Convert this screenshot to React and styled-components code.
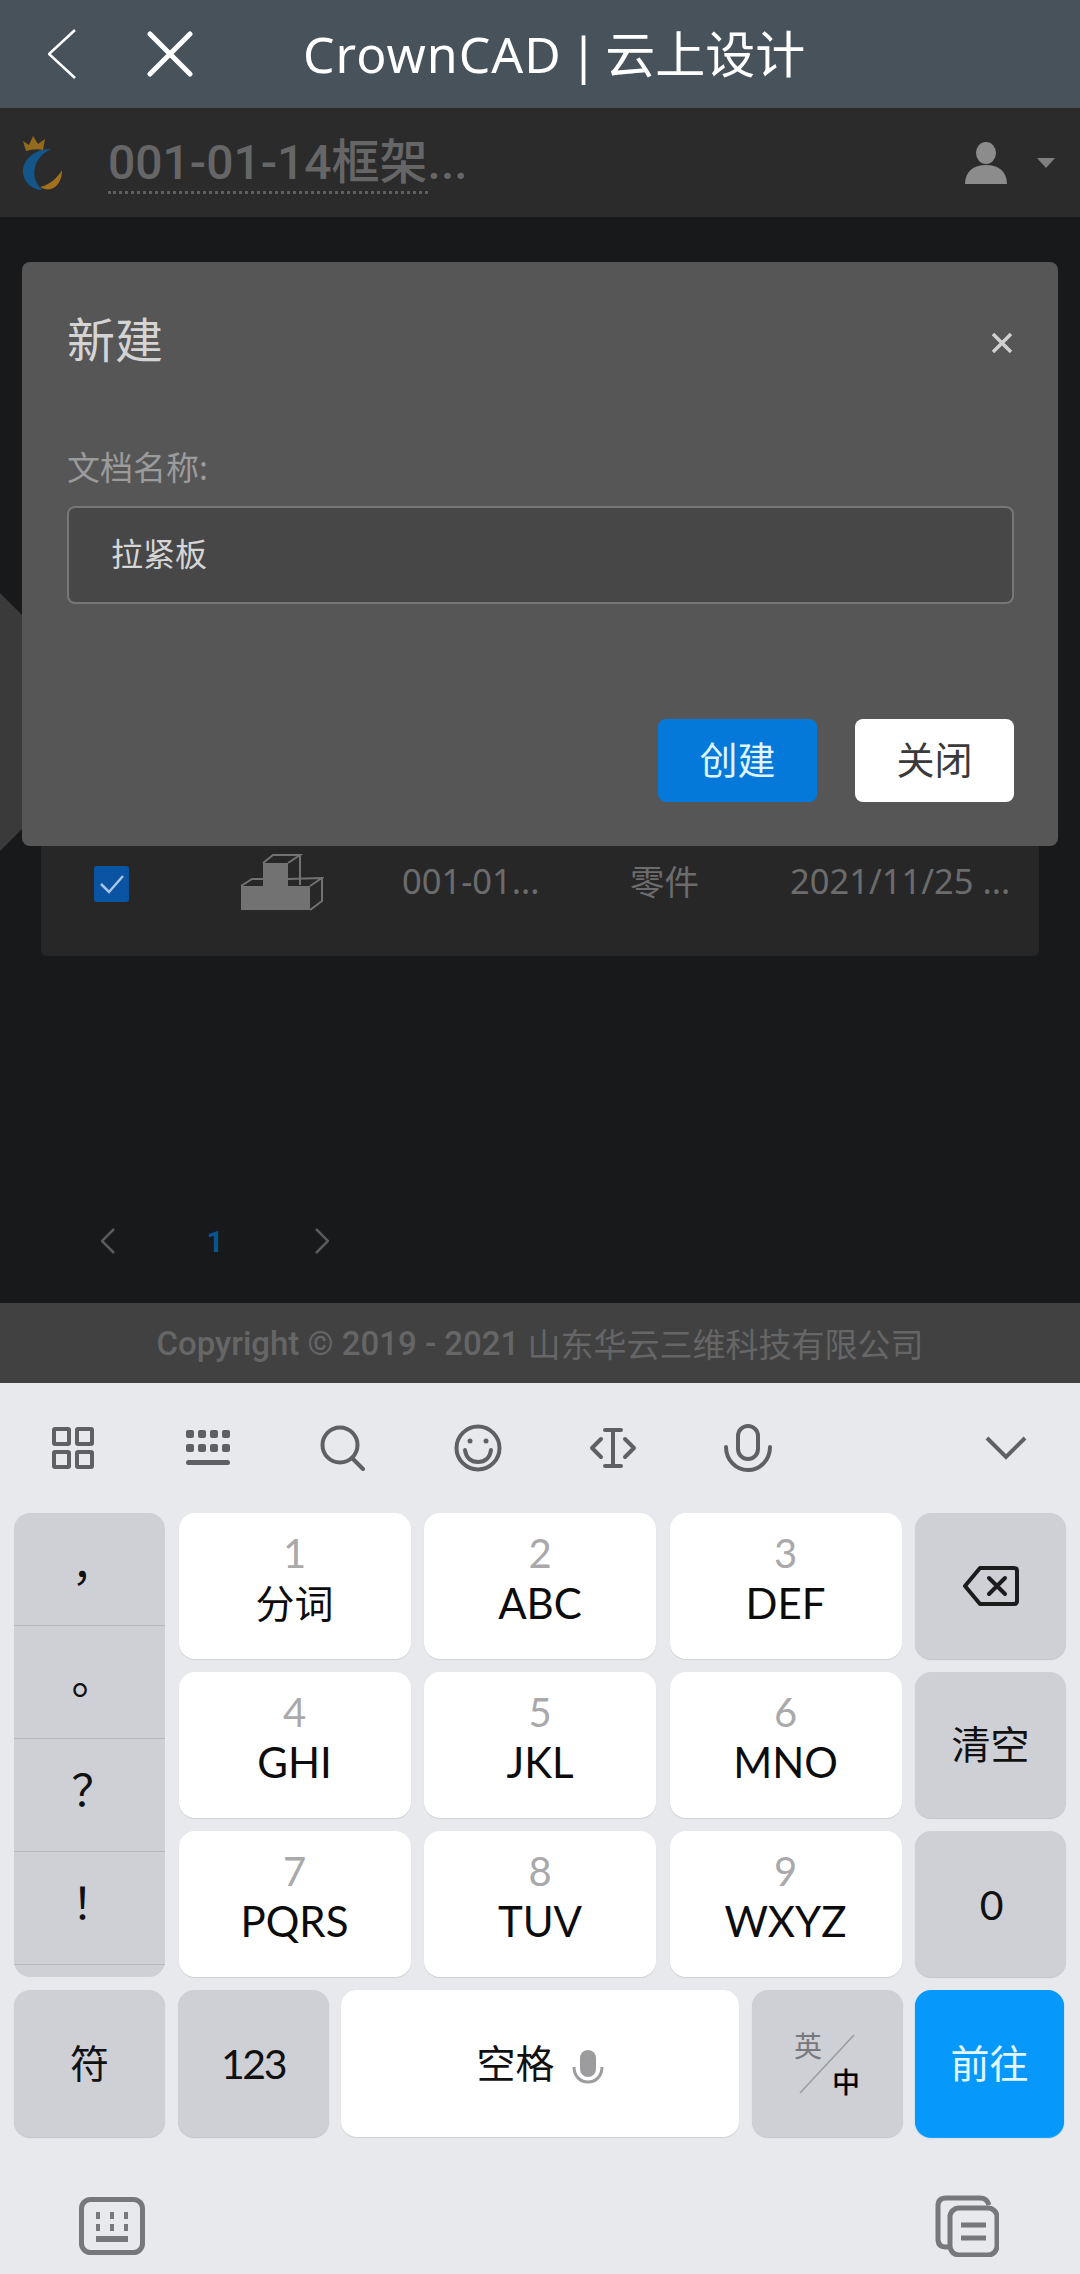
import React from 'react';
import styled, { createGlobalStyle } from 'styled-components';

const CJK = '"Noto Sans CJK SC", sans-serif';

const GlobalStyle = createGlobalStyle`
    html, body {
        margin: 0;
        padding: 0;
        background: #18191b;
    }
    * {
        box-sizing: border-box;
    }
`;

const Screen = styled.div`
    display: flex;
    flex-direction: column;
    width: 1080px;
    height: 2274px;
    overflow: hidden;
    font-family: "Noto Sans", ${CJK};
`;

/* browser title bar */
const TopBar = styled.header`
    display: flex;
    align-items: center;
    flex: none;
    height: 108px;
    padding-left: 48px;
    background-color: #47525b;
    color: #fff;
`;

const TopTitle = styled.h1`
    margin: 0 0 0 110px;
    font-size: 50px;
    font-weight: 400;
    line-height: 60px;
    word-spacing: -5px;
    white-space: nowrap;
`;

const TopBrand = styled.span`
    letter-spacing: 1px;
`;

const CloseGlyph = styled.svg`
    margin-left: 71px;
`;

/* site header */
const SiteHeader = styled.div`
    display: flex;
    align-items: center;
    flex: none;
    height: 109px;
    padding: 0 25px 0 20px;
    background-color: #2b2b2c;
`;

const DocTitle = styled.div`
    margin-left: 44px;
    font-family: Roboto, ${CJK};
    font-size: 48px;
    font-weight: 500;
    line-height: 56px;
    color: #666667;
    white-space: nowrap;
`;

const Dotted = styled.span`
    border-bottom: 3px dotted #5f5f60;
`;

const UserBox = styled.div`
    display: flex;
    align-items: center;
    gap: 29px;
    margin-left: auto;
`;

/* page body below the header */
const Main = styled.main`
    position: relative;
    flex: 1;
    padding: 593px 41px 0;
    background-color: #18191b;
`;

const SideShape = styled.div`
    position: absolute;
    top: 376px;
    left: 0;
    width: 22px;
    height: 258px;
    background-color: #3a3a3b;
    clip-path: polygon(0 0, 100% 22px, 100% 236px, 0 100%);
`;

const TableCard = styled.div`
    height: 146px;
    border-radius: 6px;
    background-color: #272728;
`;

const TableRow = styled.div`
    display: grid;
    grid-template-columns: 146px 162px 228px 160px 226px;
    align-items: center;
    height: 146px;
    padding-left: 53px;
    font-family: "Noto Sans", ${CJK};
    font-size: 34.5px;
    color: #6c6c6d;
    white-space: nowrap;
`;

const RowText = styled.span`
    padding-bottom: 6px;
`;

const CheckBox = styled.div`
    display: flex;
    align-items: center;
    justify-content: center;
    width: 35px;
    height: 36px;
    margin-top: 2px;
    border-radius: 3px;
    background-color: #0b54a3;
`;

const Pager = styled.nav`
    display: flex;
    align-items: center;
    height: 60px;
    margin-top: 255px;
    padding-left: 60px;
`;

const PageCell = styled.div`
    display: flex;
    align-items: center;
    justify-content: center;
    width: 14px;
    margin-right: ${({ $gap }) => $gap}px;
`;

const PageNumber = styled(PageCell)`
    font-family: Roboto, sans-serif;
    font-size: 30px;
    font-weight: 700;
    color: #0a558f;
`;

const Modal = styled.section`
    position: absolute;
    top: 45px;
    left: 22px;
    width: 1036px;
    height: 584px;
    padding: 50px 44px 0 45px;
    border-radius: 8px;
    background-color: #565657;
`;

const ModalHead = styled.div`
    display: flex;
    align-items: center;
    justify-content: space-between;
    height: 56px;
    padding-right: 1px;
`;

const ModalTitle = styled.h2`
    margin: 0;
    font-size: 48px;
    font-weight: 400;
    line-height: 56px;
    color: #d4d4d5;
`;

const CloseMark = styled.svg`
    margin-top: 6px;
`;

const FieldLabel = styled.label`
    display: block;
    margin-top: 78px;
    font-size: 33px;
    line-height: 44px;
    color: #9b9b9c;
`;

const FieldBox = styled.div`
    display: flex;
    align-items: center;
    height: 98px;
    margin-top: 16px;
    padding: 0 0 7px 42px;
    border: 2px solid #77777a;
    border-radius: 8px;
    background-color: #474748;
    font-size: 32px;
    color: #d6d6d7;
`;

const ModalFoot = styled.div`
    display: flex;
    justify-content: flex-end;
    gap: 38px;
    margin-top: 115px;
`;

const ModalButton = styled.button`
    width: 159px;
    height: 83px;
    padding: 0 0 7px;
    border: none;
    border-radius: 8px;
    font-family: inherit;
    font-size: 38px;
    background-color: ${({ $primary }) => ($primary ? '#0479d9' : '#fff')};
    color: ${({ $primary }) => ($primary ? '#dff4ff' : '#3a3a3a')};
`;

const Footer = styled.footer`
    display: flex;
    align-items: center;
    justify-content: center;
    flex: none;
    height: 80px;
    background-color: #414142;
    font-family: Roboto, ${CJK};
    font-size: 33px;
    font-weight: 500;
    color: #666667;
    white-space: pre;
`;

const FooterCn = styled.span`
    font-weight: 400;
`;

/* input method keyboard */
const Keyboard = styled.div`
    flex: none;
    height: 891px;
    background-color: #e8e9ed;
`;

const KeyToolbar = styled.div`
    display: flex;
    align-items: center;
    height: 130px;
    padding: 0 7px 0 5px;
`;

const ToolSlot = styled.div`
    display: flex;
    align-items: center;
    justify-content: center;
    width: 135px;
    ${({ $end }) => $end && 'margin-left: auto;'}
`;

const KeyGrid = styled.div`
    display: grid;
    grid-template-columns: 151px 232px 232px 232px 151px;
    grid-template-rows: repeat(3, 146px);
    gap: 13px 13.5px;
    padding: 0 14px;
`;

const tones = {
    white: { bg: '#fff', fg: '#111', edge: '#cfd0d4' },
    gray: { bg: '#cfd0d5', fg: '#111', edge: '#c2c3c8' },
    blue: { bg: '#0699fb', fg: '#e2f6ff', edge: '#0699fb' },
};

const Key = styled.div`
    display: flex;
    flex-direction: column;
    align-items: center;
    justify-content: center;
    flex: ${({ $width }) => ($width ? `0 0 ${$width}px` : 'none')};
    border-radius: 16px;
    background-color: ${({ $tone }) => tones[$tone].bg};
    box-shadow: 0 1px 1px ${({ $tone }) => tones[$tone].edge};
    font-size: 39px;
    color: ${({ $tone }) => tones[$tone].fg};
`;

const KeyCn = styled.span`
    padding-bottom: 6px;
`;

const DigitKey = styled(Key)`
    justify-content: flex-start;
    padding-top: 16px;
`;

const Digit = styled.span`
    font-family: Lato, sans-serif;
    font-size: 40px;
    line-height: 48px;
    color: #a9a9ab;
`;

const Letters = styled.span`
    font-family: Lato, ${CJK};
    font-size: 42px;
    line-height: 52px;
    color: #0c0c0c;
`;

const CnLetters = styled(Letters)`
    font-size: 39px;
`;

const PunctColumn = styled.div`
    display: flex;
    flex-direction: column;
    grid-row: 1 / 4;
    padding-bottom: 12px;
    border-radius: 16px;
    background-color: #cfd0d5;
`;

const PunctKey = styled.div`
    display: flex;
    align-items: center;
    justify-content: center;
    flex: 1;
    padding: 0 0 14px 8px;
    border-bottom: 1px solid #b7b8bc;
    font-family: ${CJK};
    font-size: 44px;
    color: #111;
`;

const NumberText = styled.span`
    font-family: Lato, sans-serif;
    font-size: 41px;
    letter-spacing: -2.5px;
`;

const BottomRow = styled.div`
    display: flex;
    gap: 12.5px;
    height: 147px;
    margin-top: 13px;
    padding: 0 14px;
`;

const SpaceLabel = styled.div`
    display: flex;
    align-items: center;
    gap: 17px;
    font-size: 39px;
`;

const SpaceMicBox = styled.svg`
    margin-top: 6px;
`;

const LangKey = styled(Key)`
    position: relative;
    display: grid;
    grid-template-columns: 28px 28px;
    grid-template-rows: 32px 32px;
    gap: 4px 10px;
    align-content: center;
    justify-content: center;
    font-size: 28px;
`;

const LangOff = styled.span`
    grid-area: 1 / 1;
    line-height: 32px;
    color: #77787c;
`;

const LangOn = styled.span`
    grid-area: 2 / 2;
    line-height: 32px;
    font-weight: 500;
    color: #000;
`;

const LangSlash = styled.svg`
    position: absolute;
    top: 44px;
    left: 47px;
`;

const BottomBar = styled.div`
    display: flex;
    align-items: center;
    justify-content: space-between;
    padding: 58px 81px 0 79px;
`;

const Logo = () => (
    <svg width="44" height="56" viewBox="0 0 44 56">
        <path d="M3 6l6 4 4-9 5 8 7-5-2 11q-8-2-17 1z" fill="#946a1c" />
        <path
            d="M31 14C13 14 2 26 3 38c1 9 9 17 19 17-7-7-9-15-7-23 2-8 8-14 16-18z"
            fill="#14568a"
        />
        <path d="M42 35c-4 7-12 15-22 17 6 4 14 3 18-3 3-4 4-9 4-14z" fill="#a3701b" />
    </svg>
);

const CubeIcon = () => (
    <svg width="84" height="60" viewBox="0 0 84 60">
        <path d="M1 33h22V10h25v23h22v24H1z" fill="#727273" />
        <g fill="none" stroke="#727273" strokeWidth="2">
            <path d="M23 10l10-8h27l-12 8M60 2v30" />
            <path d="M1 33l11-7h11M48 26l34-1-12 8M82 25v23l-12 9" />
        </g>
    </svg>
);

const Chevron = ({ left, size = 26, width = 14, color = '#5b5b5c', stroke = 2.5 }) => (
    <svg width={width} height={size} viewBox={`0 0 ${width} ${size}`}>
        <path
            d={
                left
                    ? `M${width - 1} 1L1 ${size / 2}L${width - 1} ${size - 1}`
                    : `M1 1L${width - 1} ${size / 2}L1 ${size - 1}`
            }
            fill="none"
            stroke={color}
            strokeWidth={stroke}
        />
    </svg>
);

const toolProps = {
    fill: 'none',
    stroke: '#5f6063',
    strokeWidth: 4,
    strokeLinecap: 'round',
    strokeLinejoin: 'round',
};

const GridTool = () => (
    <svg width="44" height="44" viewBox="0 0 44 44" {...toolProps}>
        <rect x="3" y="3" width="15" height="15" rx="1" />
        <rect x="26" y="3" width="15" height="15" rx="1" />
        <rect x="3" y="26" width="15" height="15" rx="1" />
        <rect x="26" y="26" width="15" height="15" rx="1" />
    </svg>
);

const KeysTool = () => (
    <svg width="44" height="36" viewBox="0 0 44 36" fill="#5f6063">
        {[0, 1, 2, 3].map((i) => (
            <React.Fragment key={i}>
                <rect x={i * 12} y="0" width="8" height="8" rx="2" />
                <rect x={i * 12} y="14" width="8" height="8" rx="2" />
            </React.Fragment>
        ))}
        <rect x="0" y="30" width="44" height="5" rx="2.5" />
    </svg>
);

const SearchTool = () => (
    <svg width="46" height="46" viewBox="0 0 46 46" {...toolProps}>
        <circle cx="20" cy="20" r="17.5" />
        <path d="M32 33l11 11" />
    </svg>
);

const SmileTool = () => (
    <svg width="48" height="48" viewBox="0 0 48 48" {...toolProps}>
        <circle cx="24" cy="24" r="21.5" />
        <circle cx="16" cy="17" r="2.5" fill="#5f6063" stroke="none" />
        <circle cx="32" cy="17" r="2.5" fill="#5f6063" stroke="none" />
        <path d="M11 26c1 8 6 12 13 12s12-4 13-12" />
    </svg>
);

const CursorTool = () => (
    <svg width="48" height="40" viewBox="0 0 48 40" {...toolProps}>
        <path d="M16 2h16M16 38h16M24 2v36" />
        <path d="M12 11L3 20l9 9M36 11l9 9-9 9" />
    </svg>
);

const MicTool = () => (
    <svg width="48" height="48" viewBox="0 0 48 48" {...toolProps}>
        <rect x="14" y="2" width="20" height="33" rx="10" />
        <path d="M2 23c0 13 10 23 22 23s22-10 22-23" />
    </svg>
);

const CollapseTool = () => (
    <svg width="42" height="24" viewBox="0 0 42 24" fill="none" stroke="#5f6063" strokeWidth="4">
        <path d="M2 2l19 19L40 2" />
    </svg>
);

const BackspaceIcon = () => (
    <svg width="56" height="40" viewBox="0 0 56 40" fill="none" stroke="#1c1c1e" strokeWidth="4" strokeLinejoin="round">
        <path d="M17 2h34q3 0 3 3v30q0 3-3 3H17L2 20z" />
        <path d="M26 12l16 16M42 12L26 28" strokeLinecap="round" />
    </svg>
);

const SpaceMic = () => (
    <SpaceMicBox width="32" height="34" viewBox="0 0 32 34">
        <rect x="8" y="0" width="16" height="27" rx="8" fill="#9c9c9e" />
        <path d="M2 17c0 9 6 15 14 15s14-6 14-15" fill="none" stroke="#9c9c9e" strokeWidth="3" />
    </SpaceMicBox>
);

const KeyboardIcon = () => (
    <svg width="66" height="58" viewBox="0 0 66 58" fill="#77787c">
        <rect x="2.5" y="2.5" width="61" height="53" rx="9" fill="none" stroke="#77787c" strokeWidth="5" />
        {[0, 1, 2].map((i) => (
            <React.Fragment key={i}>
                <rect x={17 + i * 14} y="15" width="4" height="7" />
                <rect x={17 + i * 14} y="27" width="4" height="7" />
            </React.Fragment>
        ))}
        <rect x="17" y="39" width="32" height="6" />
    </svg>
);

const CopyIcon = () => (
    <svg width="64" height="62" viewBox="0 0 64 62" fill="none" stroke="#77787c" strokeWidth="5">
        <path d="M13 52h-2q-8 0-8-8V11q0-8 8-8h34q7 0 9 7" />
        <rect x="15" y="13" width="47" height="47" rx="9" fill="#e8e9ed" />
        <path d="M26 30h25M26 43h25" strokeWidth="5" />
    </svg>
);

const digitKeys = [
    ['1', '分词', true],
    ['2', 'ABC'],
    ['3', 'DEF'],
    ['4', 'GHI'],
    ['5', 'JKL'],
    ['6', 'MNO'],
    ['7', 'PQRS'],
    ['8', 'TUV'],
    ['9', 'WXYZ'],
];

const DigitCell = ({ item }) => (
    <DigitKey $tone="white">
        <Digit>{item[0]}</Digit>
        {item[2] ? <CnLetters>{item[1]}</CnLetters> : <Letters>{item[1]}</Letters>}
    </DigitKey>
);

export default function App() {
    return (
        <Screen>
            <GlobalStyle />
            <TopBar>
                <Chevron left size={50} width={28} color="#fff" stroke={2.5} />
                <CloseGlyph width="46" height="46" viewBox="0 0 46 46" fill="none" stroke="#fff" strokeWidth="5" strokeLinecap="round">
                    <path d="M3 3l40 40M43 3L3 43" />
                </CloseGlyph>
                <TopTitle>
                    <TopBrand>CrownCAD</TopBrand> | 云上设计
                </TopTitle>
            </TopBar>

            <SiteHeader>
                <Logo />
                <DocTitle>
                    <Dotted>001-01-14框架</Dotted>...
                </DocTitle>
                <UserBox>
                    <svg width="44" height="42" viewBox="0 0 44 42" fill="#8c8c8d">
                        <ellipse cx="22" cy="11" rx="10" ry="11" />
                        <path d="M1 42c0-12 8-19 21-19s21 7 21 19z" />
                    </svg>
                    <svg width="18" height="10" viewBox="0 0 18 10" fill="#808081">
                        <path d="M0 0h18L9 10z" />
                    </svg>
                </UserBox>
            </SiteHeader>

            <Main>
                <SideShape />
                <TableCard>
                    <TableRow>
                        <CheckBox>
                            <svg width="24" height="20" viewBox="0 0 24 20" fill="none" stroke="#a9c6e6" strokeWidth="2.5">
                                <path d="M1 10l8 8L23 2" />
                            </svg>
                        </CheckBox>
                        <CubeIcon />
                        <RowText>001-01...</RowText>
                        <RowText>零件</RowText>
                        <RowText>2021/11/25 ...</RowText>
                    </TableRow>
                </TableCard>

                <Pager>
                    <PageCell $gap={93}>
                        <Chevron left />
                    </PageCell>
                    <PageNumber $gap={93}>1</PageNumber>
                    <PageCell $gap={0}>
                        <Chevron />
                    </PageCell>
                </Pager>

                <Modal>
                    <ModalHead>
                        <ModalTitle>新建</ModalTitle>
                        <CloseMark width="22" height="22" viewBox="0 0 22 22" fill="none" stroke="#d0d0d1" strokeWidth="3.5">
                            <path d="M2 2l18 18M20 2L2 20" />
                        </CloseMark>
                    </ModalHead>
                    <FieldLabel>文档名称:</FieldLabel>
                    <FieldBox>拉紧板</FieldBox>
                    <ModalFoot>
                        <ModalButton $primary>创建</ModalButton>
                        <ModalButton>关闭</ModalButton>
                    </ModalFoot>
                </Modal>
            </Main>

            <Footer>
                Copyright © 2019 - 2021 <FooterCn>山东华云三维科技有限公司</FooterCn>
            </Footer>

            <Keyboard>
                <KeyToolbar>
                    <ToolSlot><GridTool /></ToolSlot>
                    <ToolSlot><KeysTool /></ToolSlot>
                    <ToolSlot><SearchTool /></ToolSlot>
                    <ToolSlot><SmileTool /></ToolSlot>
                    <ToolSlot><CursorTool /></ToolSlot>
                    <ToolSlot><MicTool /></ToolSlot>
                    <ToolSlot $end><CollapseTool /></ToolSlot>
                </KeyToolbar>

                <KeyGrid>
                    <PunctColumn>
                        <PunctKey>，</PunctKey>
                        <PunctKey>。</PunctKey>
                        <PunctKey>？</PunctKey>
                        <PunctKey>！</PunctKey>
                    </PunctColumn>
                    <DigitCell item={digitKeys[0]} />
                    <DigitCell item={digitKeys[1]} />
                    <DigitCell item={digitKeys[2]} />
                    <Key $tone="gray"><BackspaceIcon /></Key>
                    <DigitCell item={digitKeys[3]} />
                    <DigitCell item={digitKeys[4]} />
                    <DigitCell item={digitKeys[5]} />
                    <Key $tone="gray"><KeyCn>清空</KeyCn></Key>
                    <DigitCell item={digitKeys[6]} />
                    <DigitCell item={digitKeys[7]} />
                    <DigitCell item={digitKeys[8]} />
                    <Key $tone="gray"><NumberText>0</NumberText></Key>
                </KeyGrid>

                <BottomRow>
                    <Key $tone="gray" $width={151}><KeyCn>符</KeyCn></Key>
                    <Key $tone="gray" $width={151}><NumberText>123</NumberText></Key>
                    <Key $tone="white" $width={398}>
                        <SpaceLabel>
                            <KeyCn>空格</KeyCn>
                            <SpaceMic />
                        </SpaceLabel>
                    </Key>
                    <LangKey $tone="gray" $width={151}>
                        <LangOff>英</LangOff>
                        <LangOn>中</LangOn>
                        <LangSlash width="56" height="60" viewBox="0 0 56 60" fill="none" stroke="#9a9b9f" strokeWidth="1.5">
                            <path d="M55 1L1 59" />
                        </LangSlash>
                    </LangKey>
                    <Key $tone="blue" $width={149}><KeyCn>前往</KeyCn></Key>
                </BottomRow>

                <BottomBar>
                    <KeyboardIcon />
                    <CopyIcon />
                </BottomBar>
            </Keyboard>
        </Screen>
    );
}
